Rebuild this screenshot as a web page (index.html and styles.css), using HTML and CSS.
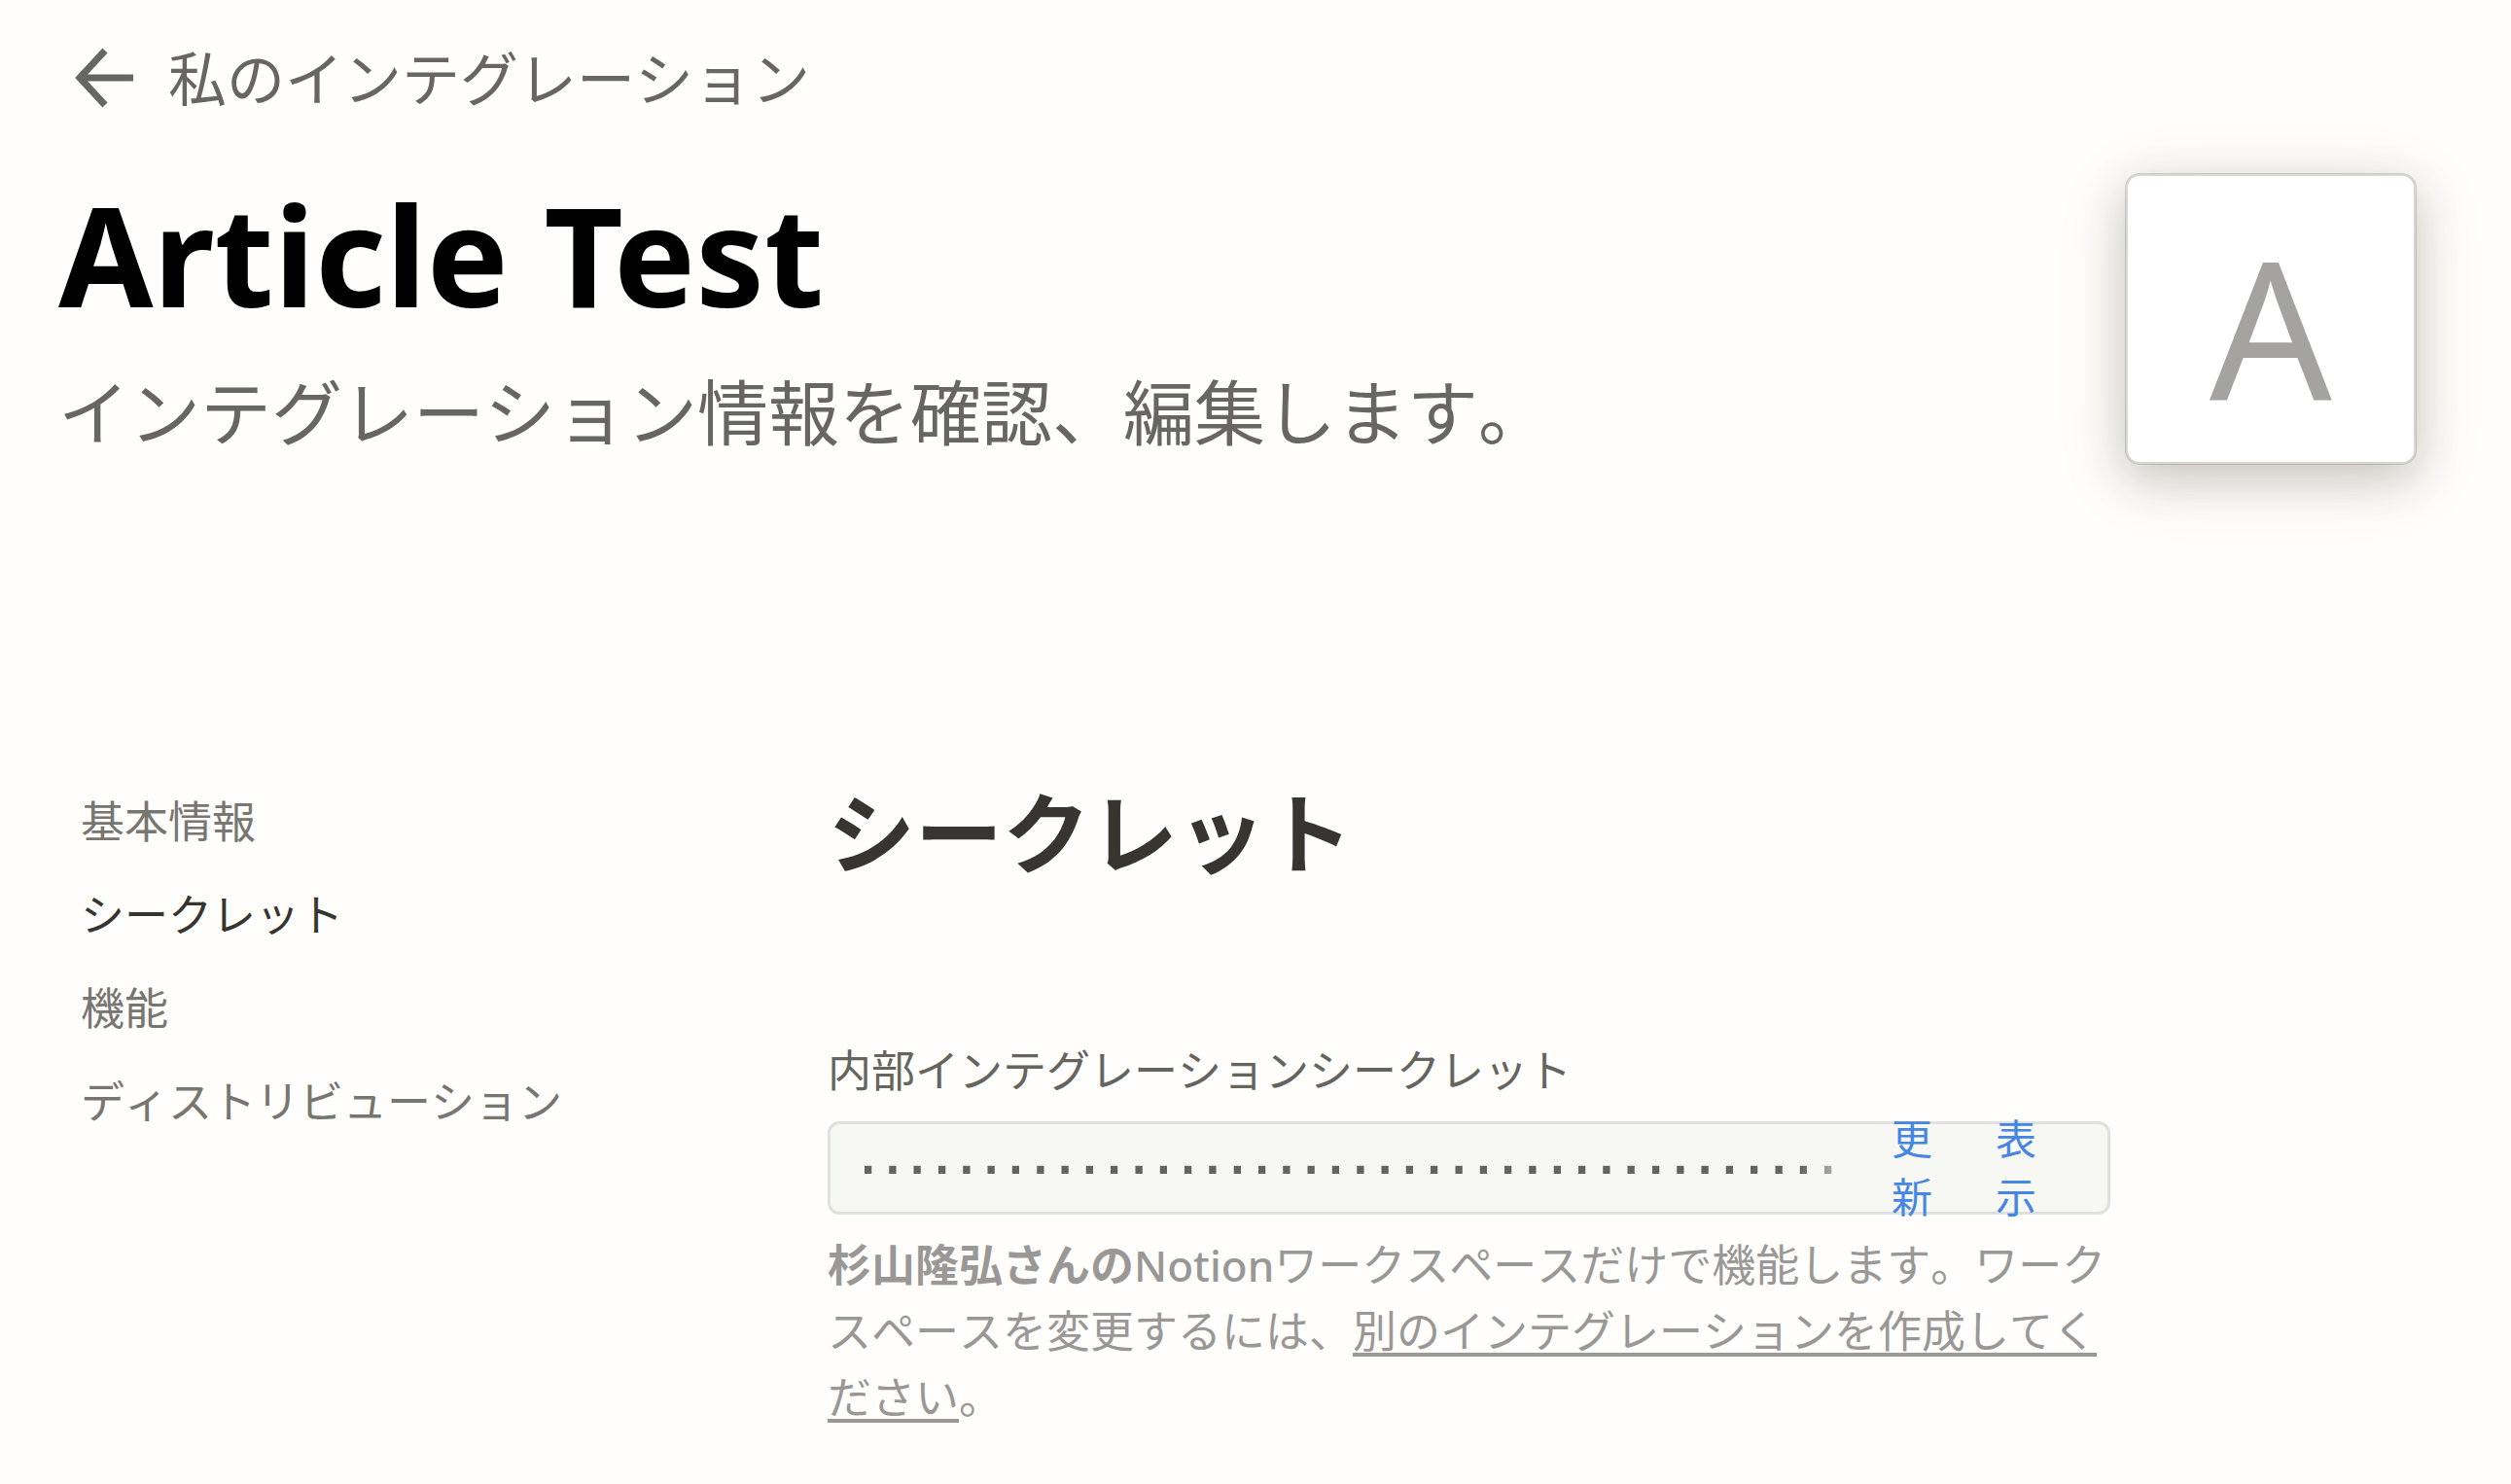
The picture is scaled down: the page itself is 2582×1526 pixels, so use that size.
FILE: index.html
```html
<!DOCTYPE html>
<html lang="ja">
<head>
<meta charset="utf-8">
<title>Article Test</title>
<link rel="stylesheet" href="styles.css">
</head>
<body>
<div class="page">
  <a class="back" href="#">
    <svg class="back-icon" viewBox="0 1 60 60" aria-hidden="true"><path d="M31 2 L5 30 L31 58 M5 30 H60" fill="none" stroke="currentColor" stroke-width="7"/></svg>
    <span>私のインテグレーション</span>
  </a>
  <header class="header">
    <div class="header-text">
      <h1 class="title">Article Test</h1>
      <p class="subtitle">インテグレーション情報を確認、編集します。</p>
    </div>
    <div class="logo">A</div>
  </header>
  <div class="layout">
    <nav class="nav">
      <a class="nav-link" href="#">基本情報</a>
      <a class="nav-link nav-link-active" href="#">シークレット</a>
      <a class="nav-link" href="#">機能</a>
      <a class="nav-link" href="#">ディストリビューション</a>
    </nav>
    <main class="content">
      <h2 class="section-title">シークレット</h2>
      <label class="label" for="secret">内部インテグレーションシークレット</label>
      <div class="field">
        <input class="secret" id="secret" type="text" readonly value="········································">
        <div class="actions">
          <button class="action" type="button">更新</button>
          <button class="action" type="button">表示</button>
        </div>
      </div>
      <p class="note"><strong>杉山隆弘さんの</strong><span class="brand">Notion</span>ワークスペースだけで機能します。ワークスペースを変更するには、<a class="note-link" href="#">別のインテグレーションを作成してください</a>。</p>
    </main>
  </div>
</div>
</body>
</html>
```
FILE: styles.css
```css
* {
  box-sizing: border-box;
}

body {
  margin: 0;
  background: #fffefc;
  color: #37352f;
  font-family: "Noto Sans", "Noto Sans CJK JP", sans-serif;
  font-size: 45px;
  font-kerning: none;
}

h1, h2, p {
  margin: 0;
}

a {
  color: inherit;
  text-decoration: none;
}

.page {
  padding: 45px 97px 48px 60px;
}

.back {
  display: flex;
  align-items: center;
  gap: 36px;
  width: fit-content;
  padding-left: 17px;
  color: #666664;
  font-size: 60px;
  line-height: 72px;
}

.back-icon {
  width: 60px;
  height: 60px;
  overflow: visible;
}

.header {
  display: flex;
  justify-content: space-between;
  align-items: flex-end;
  margin-top: 54px;
}

.title {
  color: #000;
  font-size: 141px;
  font-weight: 700;
  font-kerning: normal;
  line-height: 180px;
}

.subtitle {
  margin-top: 19px;
  color: #666664;
  font-size: 73px;
  line-height: 108px;
}

.logo {
  display: flex;
  flex: none;
  align-items: center;
  justify-content: center;
  width: 300px;
  height: 300px;
  padding-top: 14px;
  border: 3px solid rgba(15, 15, 15, 0.16);
  border-radius: 15px;
  background: #fff;
  background-clip: padding-box;
  box-shadow: 0 15px 75px rgba(55, 53, 20, 0.12), 0 15px 45px rgba(55, 45, 20, 0.18);
  color: #a5a39f;
  font-size: 197px;
  line-height: 1;
}

.layout {
  display: grid;
  grid-template-columns: 791fr 1319fr 315fr;
  margin-top: 319px;
}

.nav {
  display: flex;
  flex-direction: column;
  align-items: flex-start;
  padding-left: 23px;
}

.nav-link {
  color: #787670;
  line-height: 96px;
}

.nav-link-active {
  color: #37352f;
}

.section-title {
  font-size: 90px;
  font-weight: 700;
  line-height: 118px;
}

.label {
  display: block;
  margin-top: 156px;
  color: #65645f;
  line-height: 60px;
}

.field {
  display: flex;
  align-items: center;
  height: 96px;
  margin-top: 22px;
  padding: 0 49px 0 26px;
  border: 3px solid #e0e1dd;
  border-radius: 12px;
  background: #f7f8f3;
}

.secret {
  flex: 1;
  min-width: 0;
  height: 90px;
  padding: 0 0 8px;
  border: 0;
  outline: 0;
  background: none;
  color: #64635f;
  font-family: "Liberation Sans", sans-serif;
  font-size: 76px;
  -webkit-mask-image: linear-gradient(to right, #000 calc(100% - 70px), transparent);
  mask-image: linear-gradient(to right, #000 calc(100% - 70px), transparent);
}

.actions {
  display: flex;
  gap: 17px;
}

.action {
  width: min-content;
  padding: 0 24px;
  border: 0;
  background: none;
  color: #4585e5;
  font-family: inherit;
  font-size: 42px;
  line-height: 60px;
  cursor: pointer;
}

.note {
  margin-top: 18px;
  color: #9a9896;
  line-height: 68px;
}

.brand {
  font-size: 44px;
  font-weight: 500;
}

.note-link {
  text-decoration: underline;
  text-decoration-thickness: 4px;
  text-decoration-skip-ink: none;
  text-underline-offset: 5px;
}
```
